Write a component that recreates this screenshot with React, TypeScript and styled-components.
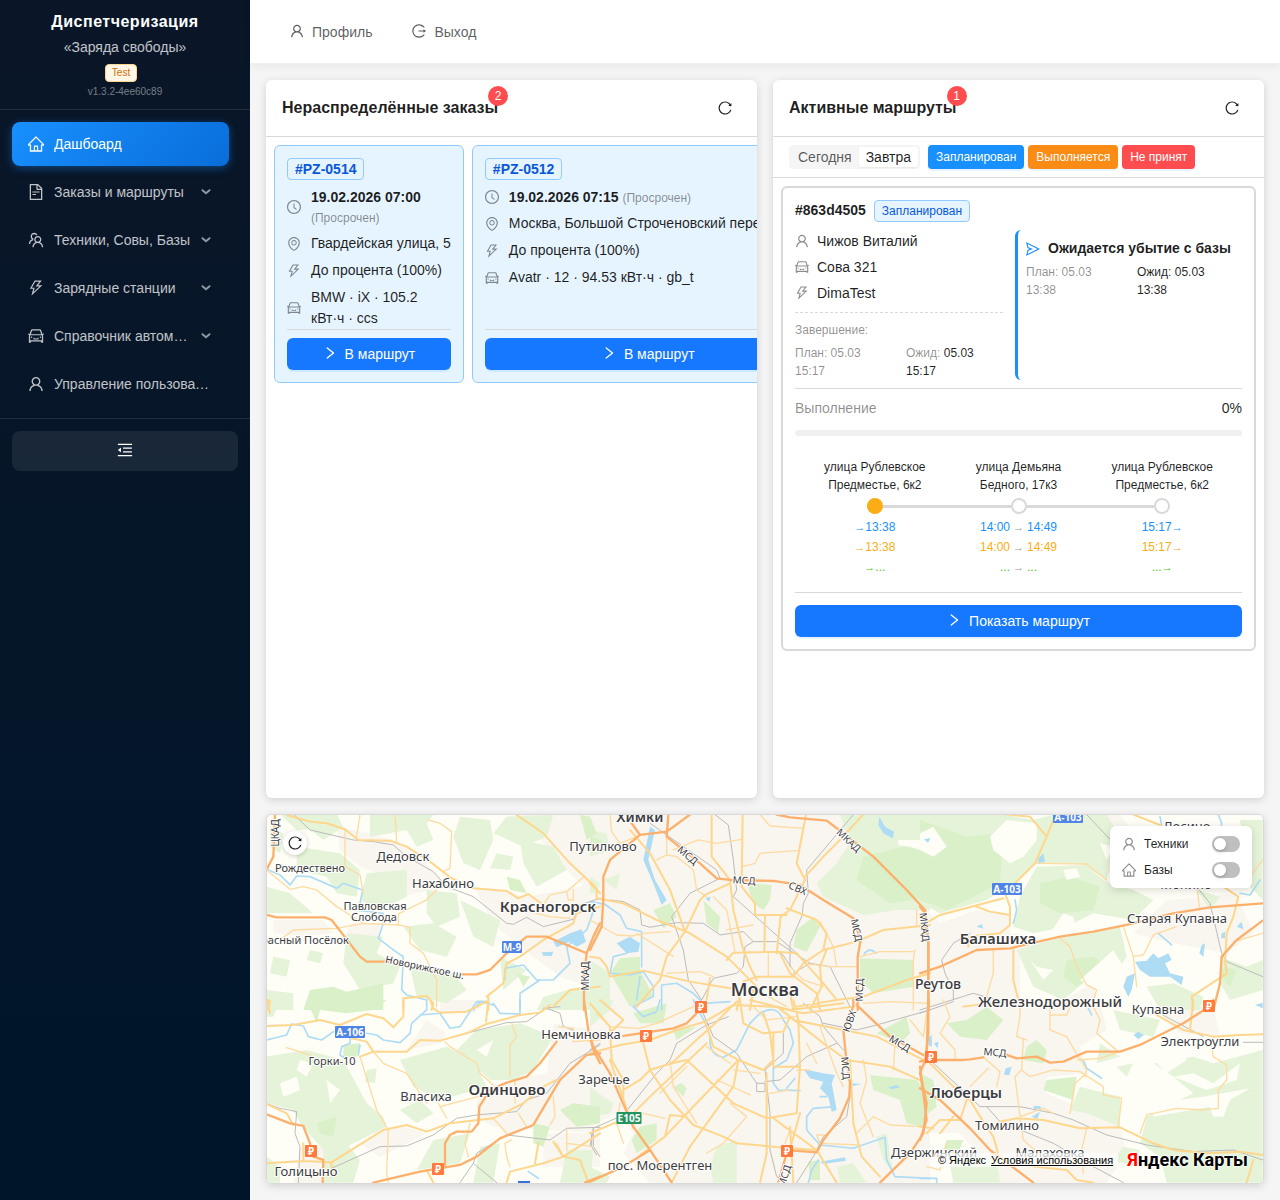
import React, { useState } from "react";
import styled, { createGlobalStyle, css } from "styled-components";
import type { IconType } from "react-icons";
import {
  AiOutlineCar,
  AiOutlineClockCircle,
  AiOutlineEnvironment,
  AiOutlineFileText,
  AiOutlineHome,
  AiOutlineLogout,
  AiOutlineMenuFold,
  AiOutlineReload,
  AiOutlineRight,
  AiOutlineSend,
  AiOutlineTeam,
  AiOutlineThunderbolt,
  AiOutlineUser,
} from "react-icons/ai";

const GlobalStyle = createGlobalStyle`
  *, *::before, *::after { box-sizing: border-box; }
  body {
    margin: 0;
    background: #f5f5f5;
    color: rgba(0, 0, 0, 0.88);
    font: 14px/22px "Liberation Sans", Arial, sans-serif;
  }
  button { font: inherit; color: inherit; border: 0; background: none; padding: 0; cursor: pointer; }
  a { color: inherit; text-decoration: none; }
  h1, h2, h3, p, ul, dl, dd { margin: 0; padding: 0; font-size: inherit; }
  ul { list-style: none; }
  svg { flex: none; display: block; }
`;

/* ---------- shell ---------- */

const Shell = styled.div`
  display: grid;
  grid-template-columns: 250px minmax(0, 1fr);
  min-height: 100vh;
`;

const Sidebar = styled.aside`
  background: linear-gradient(180deg, #0a1628 0%, #001529 100%);
  color: rgba(255, 255, 255, 0.75);
`;

const Brand = styled.header`
  display: flex;
  flex-direction: column;
  align-items: center;
  padding: 9px 16px 7px;
  border-bottom: 1px solid rgba(255, 255, 255, 0.1);
`;

const BrandTitle = styled.h1`
  font-size: 16px;
  line-height: 26px;
  font-weight: 700;
  letter-spacing: 0.5px;
  color: #fff;
`;

const BrandSubtitle = styled.p`
  margin-top: 1px;
`;

const EnvTag = styled.span`
  margin: 6px 8px 0 0;
  padding: 0 6px;
  border: 1px solid #ffd591;
  border-radius: 4px;
  background: #fff7e6;
  color: #d46b08;
  font-size: 10px;
  line-height: 16px;
`;

const Version = styled.span`
  font-size: 10px;
  line-height: 20px;
  color: rgba(255, 255, 255, 0.45);
`;

const SideNav = styled.nav`
  padding: 12px 21px 12px 12px;
  border-bottom: 1px solid rgba(255, 255, 255, 0.1);
`;

const SideList = styled.ul`
  display: flex;
  flex-direction: column;
  gap: 4px;
`;

const sideItem = css<{ $active?: boolean }>`
  display: flex;
  align-items: center;
  width: 100%;
  height: 44px;
  padding: 0 16px;
  border-radius: 8px;
  text-align: left;
  ${(p) =>
    p.$active &&
    css`
      color: #fff;
      background: linear-gradient(135deg, #1890ff 0%, #096dd9 100%);
      box-shadow: 0 2px 8px rgba(24, 144, 255, 0.4);
    `}
`;

const SideLink = styled.a<{ $active?: boolean }>`
  ${sideItem}
`;

const SideToggle = styled.button<{ $active?: boolean }>`
  ${sideItem}
`;

const SideLabel = styled.span`
  flex: 1;
  min-width: 0;
  margin-left: 10px;
  overflow: hidden;
  white-space: nowrap;
  text-overflow: ellipsis;
`;

const ChevronWrap = styled.span`
  margin: 0 2px 0 8px;
  opacity: 0.75;
`;

const SideFooter = styled.div`
  padding: 12px;
`;

const CollapseButton = styled.button`
  display: flex;
  align-items: center;
  justify-content: center;
  width: 100%;
  height: 40px;
  padding-bottom: 2px;
  border-radius: 8px;
  background: rgba(255, 255, 255, 0.08);
  color: #fff;
`;

const Page = styled.div`
  display: flex;
  flex-direction: column;
  height: 100vh;
  min-height: 900px;
`;

const TopBar = styled.nav`
  display: flex;
  align-items: center;
  flex: none;
  height: 64px;
  padding: 0 20px;
  background: #fff;
  border-bottom: 1px solid #f0f0f0;
  box-shadow: 0 2px 8px rgba(0, 0, 0, 0.06);
`;

const TopLink = styled.a`
  display: flex;
  align-items: center;
  gap: 8px;
  padding: 0 20px;
  color: rgba(0, 0, 0, 0.65);
  svg {
    margin-bottom: 2px;
  }
`;

const Dashboard = styled.main`
  flex: 1;
  min-height: 0;
  display: grid;
  grid-template-columns: repeat(2, minmax(0, 1fr));
  grid-template-rows: minmax(0, 66fr) minmax(0, 34fr);
  gap: 16px;
  padding: 16px;
`;

/* ---------- panels ---------- */

const Panel = styled.section`
  display: flex;
  flex-direction: column;
  min-width: 0;
  overflow: hidden;
  background: #fff;
  border-radius: 6px;
  box-shadow: 0 2px 8px rgba(0, 0, 0, 0.15);
`;

const PanelHeader = styled.header`
  display: flex;
  align-items: center;
  justify-content: space-between;
  height: 57px;
  flex: none;
  padding: 0 16px;
  border-bottom: 1px solid #d9d9d9;
`;

const PanelTitle = styled.h2`
  position: relative;
  font-size: 16px;
  line-height: 24px;
  font-weight: 700;
`;

const CountBadge = styled.span`
  position: absolute;
  top: 0;
  right: 0;
  transform: translate(50%, -50%);
  min-width: 20px;
  height: 20px;
  border-radius: 10px;
  background: #ff4d4f;
  color: #fff;
  font-size: 12px;
  line-height: 20px;
  font-weight: 400;
  text-align: center;
`;

const IconButton = styled.button<{ $round?: boolean }>`
  display: flex;
  align-items: center;
  justify-content: center;
  width: ${(p) => (p.$round ? 24 : 32)}px;
  height: ${(p) => (p.$round ? 24 : 32)}px;
  border-radius: ${(p) => (p.$round ? 12 : 6)}px;
  ${(p) => p.$round && "background: #fff; box-shadow: 0 1px 4px rgba(0, 0, 0, 0.2);"}
`;

const PrimaryButton = styled.button`
  display: flex;
  align-items: center;
  justify-content: center;
  gap: 8px;
  width: 100%;
  height: 32px;
  border-radius: 6px;
  background: #1677ff;
  color: #fff;
  white-space: nowrap;
  box-shadow: 0 2px 0 rgba(5, 145, 255, 0.1);
  svg {
    margin-bottom: 2px;
  }
`;

const Tag = styled.span<{ $strong?: boolean }>`
  display: inline-block;
  padding: 0 7px;
  border: 1px solid #91caff;
  border-radius: 4px;
  background: #e6f4ff;
  color: #0958d9;
  font-size: ${(p) => (p.$strong ? 14 : 12)}px;
  font-weight: ${(p) => (p.$strong ? 700 : 400)};
  line-height: 20px;
`;

/* ---------- orders ---------- */

const OrderStrip = styled.div`
  display: flex;
  gap: 8px;
  padding: 8px;
  overflow-x: auto;
  scrollbar-width: none;
`;

const OrderCard = styled.article`
  display: flex;
  flex: none;
  flex-direction: column;
  align-items: flex-start;
  width: min-content;
  padding: 12px;
  border: 1px solid #91caff;
  border-radius: 6px;
  background: #e6f4ff;
`;

const OrderFacts = styled.ul`
  display: flex;
  flex: 1;
  flex-direction: column;
  gap: 6px;
  margin-top: 7px;
`;

const OrderFact = styled.li<{ $lead?: boolean; $nowrap?: boolean }>`
  display: flex;
  align-items: center;
  gap: 10px;
  line-height: ${(p) => (p.$lead ? 20 : 21)}px;
  white-space: ${(p) => (p.$nowrap ? "nowrap" : "normal")};
  svg {
    color: rgba(0, 0, 0, 0.45);
  }
`;

const DateTime = styled.strong`
  white-space: nowrap;
`;

const Overdue = styled.small`
  font-size: 12px;
  line-height: 12px;
  color: rgba(0, 0, 0, 0.45);
`;

const OrderFooter = styled.footer`
  width: 100%;
  padding-top: 8px;
  border-top: 1px solid #d9d9d9;
`;

/* ---------- routes ---------- */

const FilterBar = styled.div`
  display: flex;
  align-items: center;
  gap: 4px;
  padding: 8px 16px;
  border-bottom: 1px solid #d9d9d9;
`;

const Segmented = styled.div`
  display: flex;
  margin-right: 4px;
  padding: 2px;
  border-radius: 4px;
  background: #f5f5f5;
`;

const Segment = styled.button<{ $on: boolean }>`
  height: 20px;
  padding: 0 7px;
  border-radius: 2px;
  line-height: 20px;
  color: ${(p) => (p.$on ? "rgba(0, 0, 0, 0.88)" : "rgba(0, 0, 0, 0.65)")};
  ${(p) => p.$on && "background: #fff; box-shadow: 0 1px 2px rgba(0, 0, 0, 0.06);"}
`;

const StatusButton = styled.button<{ $color: string }>`
  height: 24px;
  padding: 0 8px;
  border-radius: 4px;
  background: ${(p) => p.$color};
  color: #fff;
  font-size: 12px;
  line-height: 24px;
  box-shadow: 0 2px 0 rgba(5, 145, 255, 0.1);
`;

const RouteCard = styled.article`
  margin: 8px;
  padding: 12px;
  border: 2px solid #d9d9d9;
  border-radius: 6px;
`;

const RouteHead = styled.div`
  display: flex;
  align-items: flex-start;
  gap: 8px;
`;

const RouteId = styled.h3`
  font-weight: 700;
  line-height: 20px;
`;

const RouteColumns = styled.div`
  display: flex;
  gap: 12px;
  margin: 8px 0;
`;

const Crew = styled.div`
  flex: 1 1 0;
  min-width: 0;
`;

const CrewList = styled.ul`
  display: flex;
  flex-direction: column;
  gap: 4px;
  padding-bottom: 8px;
  border-bottom: 1px dashed #d9d9d9;
  svg {
    color: rgba(0, 0, 0, 0.45);
  }
`;

const CrewRow = styled.li`
  display: flex;
  align-items: center;
  gap: 8px;
`;

const FinishTitle = styled.p`
  margin: 8px 0 4px;
  font-size: 12px;
  line-height: 19px;
  color: rgba(0, 0, 0, 0.45);
`;

const PlanTimes = styled.div`
  display: flex;
  gap: 16px;
  font-size: 12px;
  line-height: 18px;
`;

const Muted = styled.span`
  color: rgba(0, 0, 0, 0.45);
`;

const NextEvent = styled.div`
  flex: 1 1 0;
  min-width: 0;
  padding: 8px;
  border-left: 3px solid #1890ff;
  border-radius: 6px;
`;

const NextEventTitle = styled.h3`
  display: flex;
  align-items: center;
  gap: 8px;
  margin-bottom: 4px;
  line-height: 21px;
  font-weight: 700;
  white-space: nowrap;
  svg {
    color: #1890ff;
  }
`;

const ProgressRow = styled.label`
  display: flex;
  justify-content: space-between;
  padding-top: 8px;
  border-top: 1px solid #d9d9d9;
`;

const Progress = styled.progress`
  display: block;
  width: 100%;
  height: 6px;
  margin: 11px 0 22px;
  appearance: none;
  border: 0;
  border-radius: 3px;
  overflow: hidden;
  background: #f0f0f0;
  &::-webkit-progress-bar {
    background: #f0f0f0;
  }
  &::-webkit-progress-value {
    background: #1677ff;
  }
`;

const Timeline = styled.ol`
  display: grid;
  grid-template-columns: repeat(3, minmax(0, 1fr));
  margin: 0;
  padding: 0 8px 16px;
  list-style: none;
  font-size: 12px;
  line-height: 18px;
  text-align: center;
  border-bottom: 1px solid #d9d9d9;
`;

const Stop = styled.li`
  display: flex;
  flex-direction: column;
  align-items: center;
`;

const StopName = styled.p`
  max-width: 112px;
`;

const Rail = styled.div`
  display: flex;
  align-items: center;
  width: 100%;
  margin: 4px 0;
`;

const RailLine = styled.span<{ $hidden: boolean }>`
  flex: 1;
  height: 3px;
  background: ${(p) => (p.$hidden ? "transparent" : "#d9d9d9")};
`;

const RailDot = styled.span<{ $current: boolean }>`
  width: 16px;
  height: 16px;
  border: 2px solid ${(p) => (p.$current ? "#faad14" : "#d9d9d9")};
  border-radius: 8px;
  background: ${(p) => (p.$current ? "#faad14" : "#fff")};
`;

const StopTimes = styled.div`
  display: flex;
  flex-direction: column;
  gap: 2px;
`;

const TimeRow = styled.div<{ $color: string }>`
  display: flex;
  justify-content: center;
  color: ${(p) => p.$color};
`;

const Arrow = styled.span<{ $between?: boolean }>`
  font-size: 11px;
  ${(p) => p.$between && "margin: 0 3px; color: #999;"}
`;

const RouteFooter = styled.footer`
  padding-top: 12px;
`;

/* ---------- map ---------- */

const MapPanel = styled.section`
  position: relative;
  grid-column: 1 / -1;
  min-height: 0;
  overflow: hidden;
  border: 1px solid #d9d9d9;
  border-radius: 6px;
  box-shadow: 0 2px 8px rgba(0, 0, 0, 0.15);
`;

const MapCanvas = styled.svg`
  width: 100%;
  height: 100%;
  font-family: "Noto Sans", "Open Sans", sans-serif;
`;

const MapRefresh = styled.div`
  position: absolute;
  top: 16px;
  left: 16px;
`;

const LayerBox = styled.div`
  position: absolute;
  top: 11px;
  right: 11px;
  display: flex;
  flex-direction: column;
  gap: 6px;
  width: 142px;
  padding: 8px 12px;
  border-radius: 6px;
  background: #fff;
  box-shadow: 0 2px 8px rgba(0, 0, 0, 0.15);
`;

const LayerRow = styled.label`
  display: flex;
  align-items: center;
  gap: 8px;
  font-size: 12px;
  line-height: 20px;
  svg {
    color: rgba(0, 0, 0, 0.45);
  }
`;

const Switch = styled.input`
  appearance: none;
  width: 28px;
  height: 16px;
  margin: 0 0 0 auto;
  padding: 2px;
  border-radius: 8px;
  background: #bfbfbf;
  cursor: pointer;
  &::before {
    content: "";
    display: block;
    width: 12px;
    height: 12px;
    border-radius: 6px;
    background: #fff;
    box-shadow: 0 2px 4px rgba(0, 35, 11, 0.2);
  }
  &:checked {
    background: #1677ff;
  }
  &:checked::before {
    margin-left: 12px;
  }
`;

const MapCredits = styled.div`
  position: absolute;
  right: 15px;
  bottom: 9px;
  display: flex;
  align-items: center;
  gap: 9px;
  color: #000;
`;

const Copyright = styled.span`
  display: flex;
  gap: 5px;
  padding: 0 5px;
  border-radius: 3px;
  background: rgba(255, 255, 255, 0.7);
  font-size: 11px;
  line-height: 14px;
  a {
    text-decoration: underline;
  }
`;

const MapLogo = styled.a`
  display: block;
  font: 700 18px/28px Roboto, sans-serif;
  text-shadow: 0 0 2px #fff, 0 0 2px #fff, 0 0 3px #fff;
  &::first-letter {
    color: #f00;
  }
`;

/* Map geometry: each tile is drawn in units of one third of a map pixel. */
type Layer = "urban" | "forest" | "clear" | "park" | "water" | "river" | "rail" | "minor" | "main" | "highway";
type Tile = { x: number; y: number } & Partial<Record<Layer, string>>;

const layers: { id: Layer; fill?: string; stroke?: string; width?: number }[] = [
  { id: "urban", fill: "#f9f5ef" },
  { id: "forest", fill: "#e5f3d9" },
  { id: "park", fill: "#daf0c8" },
  { id: "clear", fill: "#fefef7" },
  { id: "water", fill: "#aedcf5" },
  { id: "river", stroke: "#aedcf5", width: 5 },
  { id: "rail", stroke: "#bbb", width: 3 },
  { id: "minor", stroke: "#fedba0", width: 4 },
  { id: "main", stroke: "#fed68c", width: 6 },
  { id: "highway", stroke: "#fcb06c", width: 7 },
];

const tiles: Tile[] = [
  {
    x: -6,
    y: -24,
    urban:
      "M230 110L330 130L400 150L500 220L560 290L420 320L380 260L300 230L240 180ZM640 290L800 320L960 290L1020 260V600L900 560L780 470L700 400ZM780 72H1020V330L940 260L860 170ZM270 400L360 400L360 470L300 490L260 440ZM40 390L190 390L220 430L120 440L40 430Z",
    forest:
      "M60 72H230L250 112L190 150L150 118L110 120ZM330 75L520 75L500 100L520 150L470 170L440 120L390 130L330 140ZM600 80L690 90L700 150L660 240L610 220L580 140ZM110 170L240 190L300 240L290 320L230 310L200 260L110 240ZM320 250L440 240L440 320L360 360L300 330ZM500 300L590 310L600 380L530 410L500 370ZM600 330L720 390L700 470L640 440ZM20 290L90 310L160 370H20ZM260 430L370 440L350 490L420 530L400 580L300 600L250 520ZM430 410L520 400L590 440L560 500L480 480ZM450 530L580 550L620 600L560 640L470 620ZM20 600L100 610L100 660H20ZM740 80L880 75L860 140L790 170L700 130ZM780 150L880 170L920 240L830 290L790 220ZM720 500L800 540L730 600ZM850 620L960 590L1020 620V660H830ZM30 110L70 130L60 190L30 170ZM710 190L760 200L750 240L690 235ZM40 500L90 510L80 560L30 550ZM150 480L190 490L180 520L140 510Z",
    park: "M150 600L220 590L260 605L370 580L370 660H130ZM960 75L990 80L1010 130L980 150ZM740 260L780 270L800 310L750 300ZM770 550L810 560L790 590Z",
    water: "M880 455L930 430L965 418L978 455L950 470L930 455L890 472ZM845 487L880 485L875 498L850 497Z",
    river:
      "M25 240L60 255L90 285L110 258L150 260L230 295L250 280L308 300L300 340L280 360L370 370L370 400L355 445L400 480L430 500L425 600L440 615L500 630M735 570L735 535L790 525L830 570L880 570L930 520L920 470L980 420L1005 350M780 660V610L840 570M640 660L660 635L700 645",
    rail: "M100 72L150 120L280 150L340 155L400 165L440 200L520 245L560 290L640 320L690 360L740 400L760 403L800 382L850 410L940 388L960 345L1020 325M850 655L900 650",
    minor:
      "M300 75L290 140M405 75L410 155M255 118V230L300 255L310 310M505 90L540 100L575 125L570 235L550 245M530 300L500 330L415 372V405L450 412V460L490 490L530 570V650M20 240L90 298L130 290L170 300L230 350L310 400L415 405M60 450L100 420L230 415L310 400M850 345L870 315L920 305L970 262M830 370L870 380L930 385M920 305L925 330L940 330L940 300",
    main: "M80 75L150 95L200 100L255 118L295 150L390 152L440 170L510 215L570 262L640 295L740 303L775 325L805 312L850 345L830 370M770 75L850 130L930 220L1000 285L1020 310M680 620L730 580L740 520L780 500L850 450L940 400L950 370L1020 350M430 660V625L500 618L520 640L515 660M685 660V620M880 650L930 600L1020 590M20 630L30 632L25 660",
    highway:
      "M20 375L50 382H195L215 390L300 500L320 515H400M600 553H650L690 540L740 490L800 440L860 440L980 490L1000 440L1020 400M980 490L972 560V660M45 72L40 200L22 235",
  },
  {
    x: 324,
    y: -14,
    urban: "M0 44H1020V630H0Z",
    forest:
      "M750 44H1020V330L920 330L820 345L700 290L680 250L740 190L780 130ZM0 90L50 100L60 150L0 170ZM0 480L60 520L60 600L0 630ZM40 240L90 220L80 270ZM0 230L30 250L20 280L0 280Z",
    park: "M820 170L940 140L1020 150V290L900 310L800 240ZM670 350L690 380L650 455L610 440L620 390ZM470 250L545 255L540 300L520 330L490 310ZM190 330L240 310L260 350L220 385ZM340 300L390 350L385 400L350 370ZM90 475L150 470L150 510L190 590L120 620L60 520ZM810 475L970 480V560L850 580L810 540ZM0 110L35 120L30 145L0 150Z",
    clear: "M925 120H1020V155L990 150L960 140L925 135Z",
    water:
      "M180 80L195 90L175 180L195 240L230 300L215 315L190 250L160 180ZM80 430L120 410L150 430L145 455L110 460ZM868 50L885 80L912 95L908 115L880 100L865 75ZM345 295L362 290L358 305Z",
    river:
      "M40 310L90 345L110 385L155 395V500M110 460L70 470L60 520L120 525L160 515L190 560L190 590L130 620M215 630V555L260 550L310 580L340 610L420 605M150 530L140 600M822 462Q840 440 858 460M0 305L40 312",
    rail: "M375 44L415 75L430 180L440 270L430 290L620 460M575 460L610 510M790 44L650 210L655 280L640 310L637 345L600 430L600 500M180 70L380 210L390 235L300 280L245 350L280 450L295 540L335 600M60 300L100 305L150 330L155 375L180 382L260 368L340 370L390 405L460 395L490 425H560L660 490L720 500L750 560L780 620M490 425L465 440L460 500L440 520L370 535L335 600M610 520L660 490",
    minor:
      "M60 44L65 95L90 130L140 110M230 110V165L200 180M230 165L260 170L310 210L320 270L350 290M458 200L495 190L510 160L620 152M510 44L540 78L640 85M250 150L325 120L380 130L455 118M370 290L410 330L435 455M490 375L410 390M0 360L80 405L130 408L160 400L240 395M230 520L330 515L370 530M640 490L720 500L800 500M970 630V480L975 450M810 470L870 455L970 455M980 330V375M300 44L240 90M535 460V530M500 570L590 620M600 500L640 540L700 560M690 365L730 440L740 500M820 610L900 605L1020 610M140 400L250 470",
    main: "M365 44V170L420 240L430 330L460 450L480 500L500 540M458 44L455 260L495 310V345H590M648 44L620 190L645 240L600 330L572 350L560 460M820 44L740 130L700 170L645 230M0 250L20 270L20 295L100 310L200 360L300 400L410 470L500 560M120 90L180 160L240 270L285 395L230 470L210 540L140 620M285 395L330 300L345 285L420 250M410 480L430 458L560 455L620 460L700 550L740 600M590 325L680 360L710 400L700 450L640 490L610 530L500 530L460 545L440 630M700 450L800 425L880 390L1020 375M0 470L30 475L50 500L60 530L160 512L300 545L420 565M620 620L740 600L820 590L950 540L1020 520M525 345L523 455M710 450L690 500L695 560L660 630M570 460L600 520L680 580L690 630M360 535L350 600M480 630L490 570L540 560L600 580L610 630",
    highway:
      "M125 70L150 105L60 180L40 230V300L35 380L0 450M150 105L230 95L300 44M235 44L230 110L330 190L380 235L420 240L550 243L630 255L700 300L790 355L812 420L803 470V630M560 44L600 52L710 62L760 100L850 170L950 270L1005 330L1015 430V630",
  },
  {
    x: 654,
    y: -14,
    urban:
      "M0 310L60 370L170 330L270 340V400L350 410L400 420L300 450L300 630H0ZM740 300L860 290L950 280L1000 400L920 460L760 430L640 400ZM460 44H600L640 100L560 120ZM430 600L520 550L530 590L470 630Z",
    forest:
      "M0 44H250L340 60L400 44H560L600 110L560 240L480 190L340 190L300 240L200 300L60 340L0 310ZM350 200L490 195L560 245L640 270L700 300L640 360L520 340L440 380L340 400L280 380L300 290ZM290 450L430 410L600 380L620 470L560 560L500 540L430 600L340 560ZM900 470L980 500L1028 480V570L930 600L900 550ZM680 560L760 550L850 590L840 630H720ZM960 60L1028 60V300L990 260ZM830 270L900 290L870 330Z",
    park: "M0 60L140 110L250 100L240 250L80 330L0 300ZM360 250L450 230L540 260L520 330L420 340L360 310ZM440 480L520 470L560 500L470 560L430 530ZM30 190L120 230L90 280L30 260ZM910 500L950 510L930 560L900 530Z",
    clear:
      "M210 110L260 60L350 70L350 120L310 170L270 190L220 150ZM430 210L470 205L480 230L440 240ZM390 400L430 340L460 350L470 400ZM330 480L350 500L400 510L370 540ZM0 100L40 80L80 140L40 170L0 150ZM480 540L580 450L610 500L570 590ZM540 130L580 140L560 180Z",
    water:
      "M645 485L680 482L700 460L715 475L745 460L755 480L735 490L750 520L790 530L785 555L750 530L690 530L660 510ZM620 530L645 520L635 570L625 590L610 560ZM845 435L855 430L850 470L838 460ZM950 380L965 365L970 388ZM355 175L370 160L375 185L355 190ZM170 380L185 372L190 386ZM12 118L32 114L24 128ZM905 400L915 395V415L903 415Z",
    river: "M285 300L290 330L280 370M715 400L755 435M960 280L990 285L1020 240M895 44L905 70L900 100M720 50L725 75",
    rail: "M500 44L600 150L700 230M830 260L870 310L905 460L920 485L1028 530M150 400L100 430L65 480L75 520L100 570V600M0 630L160 580L230 600",
    minor:
      "M350 190L500 192L560 240M220 450V520L200 590M420 415L450 440L470 500L500 555L530 570L520 600L440 610M610 380L640 470L670 465L700 405L770 380M640 470L650 560M990 230L1028 180M830 260L840 330M940 425L1028 400",
    main: "M260 44L330 50L380 110L345 190L255 280L270 320V375L240 400L145 410V440M250 295L60 345L0 380M165 318L210 335L270 345M400 60L380 110M280 450V540L295 600M640 44L720 75M910 260L955 290L940 350L920 400L915 490M820 630L815 590L860 560L920 520L915 480M0 345L25 420",
    highway:
      "M0 520L60 500L170 450L270 445L420 410L520 395L620 375L760 340L870 322L1028 310M1028 362L950 420L905 470L900 550L880 630M0 320L15 340L25 430V630",
  },
  {
    x: -6,
    y: 186,
    urban:
      "M380 390L430 380L500 400L360 470L300 430ZM650 300L760 240L860 220L880 70L1020 90V400L700 380L650 350ZM700 350L800 330L830 370L740 410ZM120 440L200 440L230 500L180 548H100ZM500 60L560 100L540 130L440 150ZM540 0H680L640 40H540ZM850 400H1020V500H850Z",
    forest:
      "M20 170L140 150L250 180L320 310L370 350L380 380L260 440L190 450L120 370L100 330L20 310ZM420 180L560 140L640 180L680 260L540 300L460 260ZM590 150L650 90L780 70L880 110L820 210L760 240L690 240ZM190 450L260 430L300 480L280 548H190ZM520 420L630 400L600 490L470 510ZM20 0H60L40 50H20ZM660 440L720 430L700 548H640ZM420 330L480 300L520 340L470 370ZM920 450L1000 450L990 548H900ZM320 210L350 205L345 250L315 245ZM20 470L60 500V548H20Z",
    park: "M140 0H380L340 30L260 40L180 30L170 70ZM250 135L300 130L290 170L250 170ZM820 370L870 380L850 440L820 430ZM900 330L940 310L1020 320V370L950 380ZM170 370L230 350L220 410L180 400Z",
    clear: "M120 180L160 190L140 230L110 210ZM60 250L110 230L120 270L70 290ZM200 240L240 270L210 310ZM650 150L700 120L680 170Z",
    river:
      "M20 120L80 105L95 72L130 78L145 110L185 120L220 95M320 100L350 105L370 120L420 128L450 100L455 70L500 30V0M480 45L540 40L570 85L600 80L650 5L680 5M700 10L720 40L780 42V0M270 110V130L245 140L240 165L255 175M300 135L295 165M805 515L835 535",
    rail: "M20 312L60 325L110 335L105 400L120 440L115 548M215 505L360 440L440 438L520 405L590 355L650 345L770 335L800 300L860 280L930 190L1020 135M620 100L740 68L800 65L860 25L900 40L910 80L940 90M600 548L640 490L650 460L740 405L870 420L920 385L1020 382M640 490L710 548M1000 385V440L1020 470",
    minor:
      "M80 143L150 165M300 170L350 330L385 390L380 520L385 548M340 155L370 190L440 220L500 310M555 125L570 140L650 190L660 220L700 255M755 70L770 110L750 135V230M540 320L655 290M535 310L560 355M765 240V310M700 355L740 400M775 340L800 380M880 290L885 350L870 375M625 470L615 430L630 370M755 420L735 430L740 470L750 500M895 80L940 85V125L1020 120M920 390V450M910 470L890 430M920 430L1000 440",
    main: "M20 78L100 75L180 60L240 75L320 42L370 55L400 82L430 50V0M510 0L520 25L540 38L620 35L680 5M685 0L678 65M275 115L320 125L340 155L440 155L480 120L540 122L620 100L680 72L780 45L840 38L870 15M20 312L80 340L100 375M210 490L370 390L440 375L500 395L570 370L700 355L790 310L850 260L890 240M20 490L130 483L215 487V510M835 430L825 490M740 548L750 515L850 490L910 470L1020 400M880 425L910 470L960 480L985 548M500 510L520 548M20 0L30 40M130 430V480M300 170L340 155",
    highway:
      "M20 343L90 370L130 378L150 430L160 470L190 480L188 548M340 548L480 515L600 495L650 470L720 415L820 375L900 240L980 165L1020 160M555 495V430L570 405L590 395H635L655 370L658 320L690 270L740 248L800 230L840 190L890 125M972 0L985 90L1000 150L1020 190M975 548L1020 530",
  },
  {
    x: 324,
    y: 186,
    urban: "M0 0H1020V548H180L100 460L130 400L80 340L0 380Z",
    forest:
      "M380 440L440 420V548H370L360 500ZM0 0H70L60 30L0 80ZM40 290L70 310L60 340L0 350V260ZM860 410L890 400L910 520L880 480ZM740 500L790 490L830 548H750ZM0 500L60 530L50 548H0Z",
    park: "M150 380L200 370L200 420L140 460L125 420ZM860 100L950 50L960 100L930 130ZM840 225L980 240L1010 280L1000 380L950 370L930 300L850 270ZM130 40L230 10L220 70L150 70ZM250 260L275 248L290 265L280 290ZM655 485L690 480L690 540H660ZM250 90L320 80L260 120Z",
    water:
      "M640 208L700 220L735 225L725 250L740 330L725 335L715 290L690 265L700 245L660 235ZM690 485L765 472L768 482L700 492ZM785 250L815 252L790 258ZM895 262L920 255L930 262L905 268Z",
    river:
      "M130 20L160 50L200 35L210 0M310 0L330 40L350 75M360 110Q355 165 400 172L440 150L480 70L510 40Q560 10 580 60L600 90L610 130L590 180L550 205V250L565 270L630 272M590 265L615 235M735 320L670 325L650 350V390L690 435L790 445L885 412L890 480L915 530L1020 535M655 548L665 510L685 480M710 290L690 290",
    rail: "M0 440L10 385L100 345L200 220L240 180L260 130L350 75L415 50M335 30L370 110L440 160L500 250H525V275H500V250M525 245L570 240L650 170L740 130M640 10L690 50L700 80L760 150M525 210L540 340V450L560 530L590 548M580 100V160L525 210M620 548L670 470L700 410L770 350L780 290M700 70L800 90L860 75L1020 30M0 150L30 130M5 400V440L20 465",
    minor:
      "M60 80L150 85L200 70L310 20M0 110L60 100M20 40L60 80M100 430L80 370L90 310M350 140L420 190M240 180L250 260L320 370M160 340L225 355M380 240L480 285M430 210L510 220M420 310L470 350L400 430L350 460M490 20L530 60L620 50M580 380L600 390L585 430M650 130L680 190M690 80L740 220L760 260M820 180L830 240L810 310L850 410M800 400L850 350L900 375L1000 380M700 405L680 405L690 430L810 435M1010 40L1000 110L960 60M910 210L915 130M210 280L290 200M540 280L600 270M620 210L660 210",
    main: "M0 160L90 135L180 120L260 90L345 65L430 15M60 80L65 180L100 240V290M155 110L180 210L240 300L310 375L400 410L440 430L600 445L680 450L740 548M100 270L150 240L180 210L245 190L330 110L370 75L440 5M0 400L120 350L180 290L350 130M225 410L300 330L445 180M290 350L240 345L225 410M150 465L225 410M245 190L290 180L430 310L530 355L620 340L630 200M445 180L430 260L300 440L245 548M345 65L370 140L445 180L520 210L550 180L540 100L520 40M510 548L530 460V220M630 340L605 430M550 355L680 450M600 50L700 130L770 180L900 200L1000 245M610 60L760 90L860 110L1000 180M780 180L790 370L815 470L870 530M450 0L460 70L520 100L580 95L600 50L560 20M480 0L600 30L760 10M550 100V200L630 200L625 60L610 0M600 380L610 548M60 100L100 60L30 0M0 10L60 80M130 385L60 180M430 15L550 20L640 40L790 20",
    highway:
      "M0 110L10 140L60 220L90 290L130 380L180 450L245 548M0 545L100 500L180 450M100 108L250 85L290 70L330 30M565 548L590 460M610 452L680 457L700 420L750 355L778 290L780 250L768 170L760 90L790 20V0M800 15L900 110L1000 165M1015 0L1010 170L990 220L1010 310L1000 400L960 460L870 548",
  },
  {
    x: 654,
    y: 186,
    urban:
      "M0 0H540L560 90L480 140L500 220L380 230V280L540 350L600 380L620 460L560 548H240L120 400L0 400ZM700 20L880 20L900 110L780 100ZM720 460L780 450L760 500Z",
    forest:
      "M580 30L720 60L700 110L600 90ZM700 190L820 170L880 190L1028 150V548H740L720 470L660 430L680 350L820 280L760 230ZM480 260L600 290V380L500 340L450 330ZM610 440L660 450L640 500L580 480ZM80 440L230 480L240 548H100ZM540 130L600 170L530 190ZM590 200L640 190L620 230Z",
    park: "M80 70L140 60L200 20L250 60L200 120L120 110ZM320 140L350 120L380 150L370 190L310 180ZM380 240L470 230L460 300L370 270ZM0 220L40 240L50 320L0 360ZM80 420L130 420L110 470L70 450Z",
    clear:
      "M690 170L780 150L800 180L740 220ZM760 230L820 220L880 250L960 190L950 240L860 270ZM700 310L850 290L990 265L930 300L910 350L880 350L870 320L700 350Z",
    water:
      "M640 105L655 95L672 105L655 118ZM252 225L257 205L275 200L268 225ZM340 318H362V326H342ZM335 350L360 335L352 357ZM1005 15L1028 8V25ZM28 110L35 105L36 140L25 135ZM42 130L56 125L52 145Z",
    river: "M490 180L500 205L545 235M0 535H50V548M505 25L515 45",
    rail: "M0 40L100 5M30 180L180 320L300 320L350 330L400 340L460 360L560 405L680 435L820 455L940 450L1028 480M200 320L240 365L400 430L520 500L610 548M700 30L850 110M970 127H1028",
    minor:
      "M70 0L90 50L60 100L105 150V180M390 0V90L440 110L480 180M460 0L440 45H390M520 20L540 60L530 100L595 155M300 0V50L290 110L320 120M310 115L305 210L285 230L290 270L300 350L370 325L400 340M305 210L330 230L400 210L480 215L550 260V285L605 295L595 380M500 220L465 250L450 340M480 175L500 210L495 230M475 180L540 175L600 155M870 120L880 170L920 195V240L895 270V325L850 330L770 325L680 345L660 400M500 385L485 450L490 520M150 260L205 205M190 172L240 215L230 260M300 360L310 420L400 500M20 500L60 510L80 430",
    main: "M30 190L100 260L150 300L180 350L220 410L240 480M20 400L60 360L120 360L140 300M60 400L100 350M0 380L40 385M240 365L290 355L370 360L480 385L600 382L700 430L760 450L860 460L960 455L1028 465M710 45L790 90L880 110L960 105L1028 103M820 0L810 90M340 500L440 510L470 540L520 548M980 548L1000 480M130 20L250 5",
    highway:
      "M0 185L20 180H130L150 178L190 172M260 165L290 175L350 170L390 188L430 185L500 155L600 155L660 135L790 70L860 25L880 0M25 0V100L15 190M0 265L60 300L150 385L210 450L340 548M0 200L20 360L0 420",
  },
];

const places: [string, number, number, number, number?][] = [
  ["Химки", 374, 8, 14, 600],
  ["Путилково", 337, 37, 13],
  ["Дедовск", 137, 47, 13],
  ["Нахабино", 177, 74, 13],
  ["Рождествено", 44, 58, 11],
  ["Павловская", 109, 96, 11],
  ["Слобода", 108, 107, 11],
  ["расный Посёлок", 39, 130, 11],
  ["Красногорск", 282, 98, 15, 600],
  ["Балашиха", 732, 130, 15, 600],
  ["Москва", 499, 182, 18, 600],
  ["Реутов", 672, 175, 14, 500],
  ["Железнодорожный", 784, 193, 15, 500],
  ["Старая Купавна", 911, 109, 13],
  ["Купавна", 892, 200, 13],
  ["Электроугли", 934, 232, 13],
  ["Немчиновка", 315, 225, 13],
  ["Заречье", 338, 270, 13],
  ["Одинцово", 241, 281, 15, 600],
  ["Власиха", 160, 287, 13],
  ["Горки-10", 66, 251, 11],
  ["Голицыно", 40, 362, 13],
  ["пос. Мосрентген", 394, 356, 13],
  ["Томилино", 741, 316, 13],
  ["Люберцы", 700, 284, 15, 600],
  ["Малаховка", 784, 343, 13],
  ["Дзержинский", 668, 343, 13],
  ["Лосино", 921, 17, 13],
  ["Монино", 920, 75, 13],
];

const roadNames: [string, number, number, number][] = [
  ["ЦКАД", 9, 19, -90],
  ["МКАД", 319, 162, -90],
  ["МСД", 422, 41, 40],
  ["МСД", 478, 66, 3],
  ["СВХ", 532, 74, 24],
  ["МКАД", 583, 26, 43],
  ["МСД", 591, 116, 78],
  ["МКАД", 659, 113, 84],
  ["МСД", 593, 176, -89],
  ["ЮВХ", 583, 207, -72],
  ["МСД", 634, 229, 30],
  ["МСД", 580, 254, 85],
  ["МСД", 518, 362, -72],
  ["МСД", 729, 238, 5],
  ["Новорижское ш.", 159, 153, 12],
];

const shields: [string, number, number, string][] = [
  ["М-9", 246, 133, "#4f85e6"],
  ["А-103", 741, 75, "#4f85e6"],
  ["А-103", 802, 3, "#4f85e6"],
  ["А-106", 84, 218, "#4f85e6"],
  ["Е105", 363, 304, "#23935f"],
];

const tolls = [
  [435, 193],
  [380, 222],
  [665, 243],
  [943, 192],
  [45, 337],
  [172, 355],
  [521, 337],
];

function CityMap() {
  return (
    <MapCanvas viewBox="1 1 996 368" preserveAspectRatio="xMidYMid slice" role="img" aria-label="Карта Москвы">
      <rect width="998" height="370" fill="#fefef7" />
      {layers.map((l) => (
        <g
          key={l.id}
          fill={l.fill ?? "none"}
          stroke={l.stroke}
          strokeWidth={l.width}
          strokeLinejoin="round"
          strokeLinecap="round"
        >
          {tiles.map((t, i) => (
            <path key={i} d={t[l.id] ?? ""} transform={`translate(${t.x} ${t.y}) scale(${1 / 3})`} />
          ))}
        </g>
      ))}
      <g textAnchor="middle" stroke="#fff" strokeWidth="2" strokeLinejoin="round" paintOrder="stroke" fill="#3c3c40">
        {places.map(([name, x, y, size, weight]) => (
          <text key={name} x={x} y={y} fontSize={size} fontWeight={weight ?? 400}>
            {name}
          </text>
        ))}
        {roadNames.map(([name, x, y, angle]) => (
          <text key={`${x}-${y}`} fontSize="10" transform={`translate(${x} ${y}) rotate(${angle})`} y="4">
            {name}
          </text>
        ))}
      </g>
      <g textAnchor="middle" fill="#fff" fontWeight="700" fontSize="10">
        {shields.map(([name, x, y, color]) => {
          const w = name.length * 5 + 5;
          return (
            <g key={`${x}-${y}`}>
              <rect x={x - w / 2} y={y - 6} width={w} height="12" rx="1" fill={color} />
              <text x={x} y={y + 4}>
                {name}
              </text>
            </g>
          );
        })}
        <rect x="252" y="367" width="12" height="6" fill="#3b6fd8" />
        {tolls.map(([x, y]) => (
          <g key={`${x}-${y}`}>
            <rect x={x - 6} y={y - 6} width="12" height="12" rx="1" fill="#ff7a3c" />
            <text x={x} y={y + 4}>
              ₽
            </text>
          </g>
        ))}
      </g>
    </MapCanvas>
  );
}

/* ---------- content ---------- */

/* Trims the empty margin that the glyphs carry in their 1024-unit box. */
function Icon({ of: Glyph, size = 14 }: { of: IconType; size?: number }) {
  return <Glyph size={size} viewBox="64 64 896 896" aria-hidden />;
}

function Chevron() {
  return (
    <ChevronWrap>
      <svg width="10" height="6" viewBox="0 0 10 6" fill="none" stroke="currentColor" strokeWidth="2" strokeLinecap="round">
        <path d="M1.5 1.2L5 4.2L8.5 1.2" />
      </svg>
    </ChevronWrap>
  );
}

const menu = [
  { label: "Дашбоард", icon: AiOutlineHome, active: true },
  { label: "Заказы и маршруты", icon: AiOutlineFileText, nested: true },
  { label: "Техники, Совы, Базы", icon: AiOutlineTeam, nested: true },
  { label: "Зарядные станции", icon: AiOutlineThunderbolt, nested: true },
  { label: "Справочник автомобилей", icon: AiOutlineCar, nested: true },
  { label: "Управление пользователями", icon: AiOutlineUser },
];

const orders = [
  {
    id: "#PZ-0514",
    date: "19.02.2026 07:00",
    address: "Гвардейская улица, 5",
    goal: "До процента (100%)",
    car: "BMW · iX · 105.2 кВт·ч · ccs",
  },
  {
    id: "#PZ-0512",
    date: "19.02.2026 07:15",
    address: "Москва, Большой Строченовский переулок, 11",
    goal: "До процента (100%)",
    car: "Avatr · 12 · 94.53 кВт·ч · gb_t",
  },
];

type StopData = { name: string; arrive?: string; leave?: string };

const stops: StopData[] = [
  { name: "улица Рублевское Предместье, 6к2", leave: "13:38" },
  { name: "улица Демьяна Бедного, 17к3", arrive: "14:00", leave: "14:49" },
  { name: "улица Рублевское Предместье, 6к2", arrive: "15:17" },
];

function StopTime({ stop, color, empty }: { stop: StopData; color: string; empty?: boolean }) {
  const both = Boolean(stop.arrive && stop.leave);
  return (
    <TimeRow $color={color}>
      {stop.arrive && <span>{empty ? "..." : stop.arrive}</span>}
      <Arrow $between={both}>→</Arrow>
      {stop.leave && <span>{empty ? "..." : stop.leave}</span>}
    </TimeRow>
  );
}

function OrdersPanel() {
  return (
    <Panel>
      <PanelHeader>
        <PanelTitle>
          Нераспределённые заказы<CountBadge>2</CountBadge>
        </PanelTitle>
        <IconButton aria-label="Обновить заказы">
          <Icon of={AiOutlineReload} />
        </IconButton>
      </PanelHeader>
      <OrderStrip>
        {orders.map((o) => (
          <OrderCard key={o.id}>
            <Tag $strong>{o.id}</Tag>
            <OrderFacts>
              <OrderFact $lead>
                <Icon of={AiOutlineClockCircle} />
                <span>
                  <DateTime>{o.date}</DateTime> <Overdue>(Просрочен)</Overdue>
                </span>
              </OrderFact>
              <OrderFact $nowrap>
                <Icon of={AiOutlineEnvironment} />
                {o.address}
              </OrderFact>
              <OrderFact>
                <Icon of={AiOutlineThunderbolt} />
                {o.goal}
              </OrderFact>
              <OrderFact>
                <Icon of={AiOutlineCar} />
                {o.car}
              </OrderFact>
            </OrderFacts>
            <OrderFooter>
              <PrimaryButton>
                <Icon of={AiOutlineRight} />В маршрут
              </PrimaryButton>
            </OrderFooter>
          </OrderCard>
        ))}
      </OrderStrip>
    </Panel>
  );
}

function RoutesPanel() {
  const [day, setDay] = useState("Завтра");
  return (
    <Panel>
      <PanelHeader>
        <PanelTitle>
          Активные маршруты<CountBadge>1</CountBadge>
        </PanelTitle>
        <IconButton aria-label="Обновить маршруты">
          <Icon of={AiOutlineReload} />
        </IconButton>
      </PanelHeader>
      <FilterBar>
        <Segmented>
          {["Сегодня", "Завтра"].map((d) => (
            <Segment key={d} $on={d === day} aria-pressed={d === day} onClick={() => setDay(d)}>
              {d}
            </Segment>
          ))}
        </Segmented>
        <StatusButton $color="#1890ff">Запланирован</StatusButton>
        <StatusButton $color="#fa8c16">Выполняется</StatusButton>
        <StatusButton $color="#ff4d4f">Не принят</StatusButton>
      </FilterBar>
      <RouteCard>
        <RouteHead>
          <RouteId>#863d4505</RouteId>
          <Tag>Запланирован</Tag>
        </RouteHead>
        <RouteColumns>
          <Crew>
            <CrewList>
              <CrewRow>
                <Icon of={AiOutlineUser} />
                Чижов Виталий
              </CrewRow>
              <CrewRow>
                <Icon of={AiOutlineCar} />
                Сова 321
              </CrewRow>
              <CrewRow>
                <Icon of={AiOutlineThunderbolt} />
                DimaTest
              </CrewRow>
            </CrewList>
            <FinishTitle>Завершение:</FinishTitle>
            <PlanTimes>
              <Muted>План: 05.03 15:17</Muted>
              <span>
                <Muted>Ожид:</Muted> 05.03 15:17
              </span>
            </PlanTimes>
          </Crew>
          <NextEvent>
            <NextEventTitle>
              <Icon of={AiOutlineSend} />
              Ожидается убытие с базы
            </NextEventTitle>
            <PlanTimes>
              <Muted>План: 05.03 13:38</Muted>
              <span>Ожид: 05.03 13:38</span>
            </PlanTimes>
          </NextEvent>
        </RouteColumns>
        <ProgressRow htmlFor="route-progress">
          <Muted>Выполнение</Muted>
          <span>0%</span>
        </ProgressRow>
        <Progress id="route-progress" value={0} max={100} />
        <Timeline>
          {stops.map((s, i) => (
            <Stop key={i}>
              <StopName>{s.name}</StopName>
              <Rail>
                <RailLine $hidden={i === 0} />
                <RailDot $current={i === 0} />
                <RailLine $hidden={i === stops.length - 1} />
              </Rail>
              <StopTimes>
                <StopTime stop={s} color="#1890ff" />
                <StopTime stop={s} color="#faad14" />
                <StopTime stop={s} color="#52c41a" empty />
              </StopTimes>
            </Stop>
          ))}
        </Timeline>
        <RouteFooter>
          <PrimaryButton>
            <Icon of={AiOutlineRight} />
            Показать маршрут
          </PrimaryButton>
        </RouteFooter>
      </RouteCard>
    </Panel>
  );
}

export default function App() {
  return (
    <>
      <GlobalStyle />
      <Shell>
        <Sidebar>
          <Brand>
            <BrandTitle>Диспетчеризация</BrandTitle>
            <BrandSubtitle>«Заряда свободы»</BrandSubtitle>
            <EnvTag>Test</EnvTag>
            <Version>v1.3.2-4ee60c89</Version>
          </Brand>
          <SideNav>
            <SideList>
              {menu.map(({ label, icon, active, nested }) => (
                <li key={label}>
                  {nested ? (
                    <SideToggle aria-expanded={false}>
                      <Icon of={icon} size={16} />
                      <SideLabel>{label}</SideLabel>
                      <Chevron />
                    </SideToggle>
                  ) : (
                    <SideLink href="#" $active={active}>
                      <Icon of={icon} size={16} />
                      <SideLabel>{label}</SideLabel>
                    </SideLink>
                  )}
                </li>
              ))}
            </SideList>
          </SideNav>
          <SideFooter>
            <CollapseButton aria-label="Свернуть меню">
              <Icon of={AiOutlineMenuFold} size={16} />
            </CollapseButton>
          </SideFooter>
        </Sidebar>
        <Page>
          <TopBar>
            <TopLink href="#">
              <Icon of={AiOutlineUser} />
              Профиль
            </TopLink>
            <TopLink href="#">
              <Icon of={AiOutlineLogout} />
              Выход
            </TopLink>
          </TopBar>
          <Dashboard>
            <OrdersPanel />
            <RoutesPanel />
            <MapPanel>
              <CityMap />
              <MapRefresh>
                <IconButton $round aria-label="Обновить карту">
                  <Icon of={AiOutlineReload} />
                </IconButton>
              </MapRefresh>
              <LayerBox>
                <LayerRow>
                  <Icon of={AiOutlineUser} />
                  Техники
                  <Switch type="checkbox" role="switch" />
                </LayerRow>
                <LayerRow>
                  <Icon of={AiOutlineHome} />
                  Базы
                  <Switch type="checkbox" role="switch" />
                </LayerRow>
              </LayerBox>
              <MapCredits>
                <Copyright>
                  © Яндекс <a href="#">Условия использования</a>
                </Copyright>
                <MapLogo href="#">Яндекс Карты</MapLogo>
              </MapCredits>
            </MapPanel>
          </Dashboard>
        </Page>
      </Shell>
    </>
  );
}
